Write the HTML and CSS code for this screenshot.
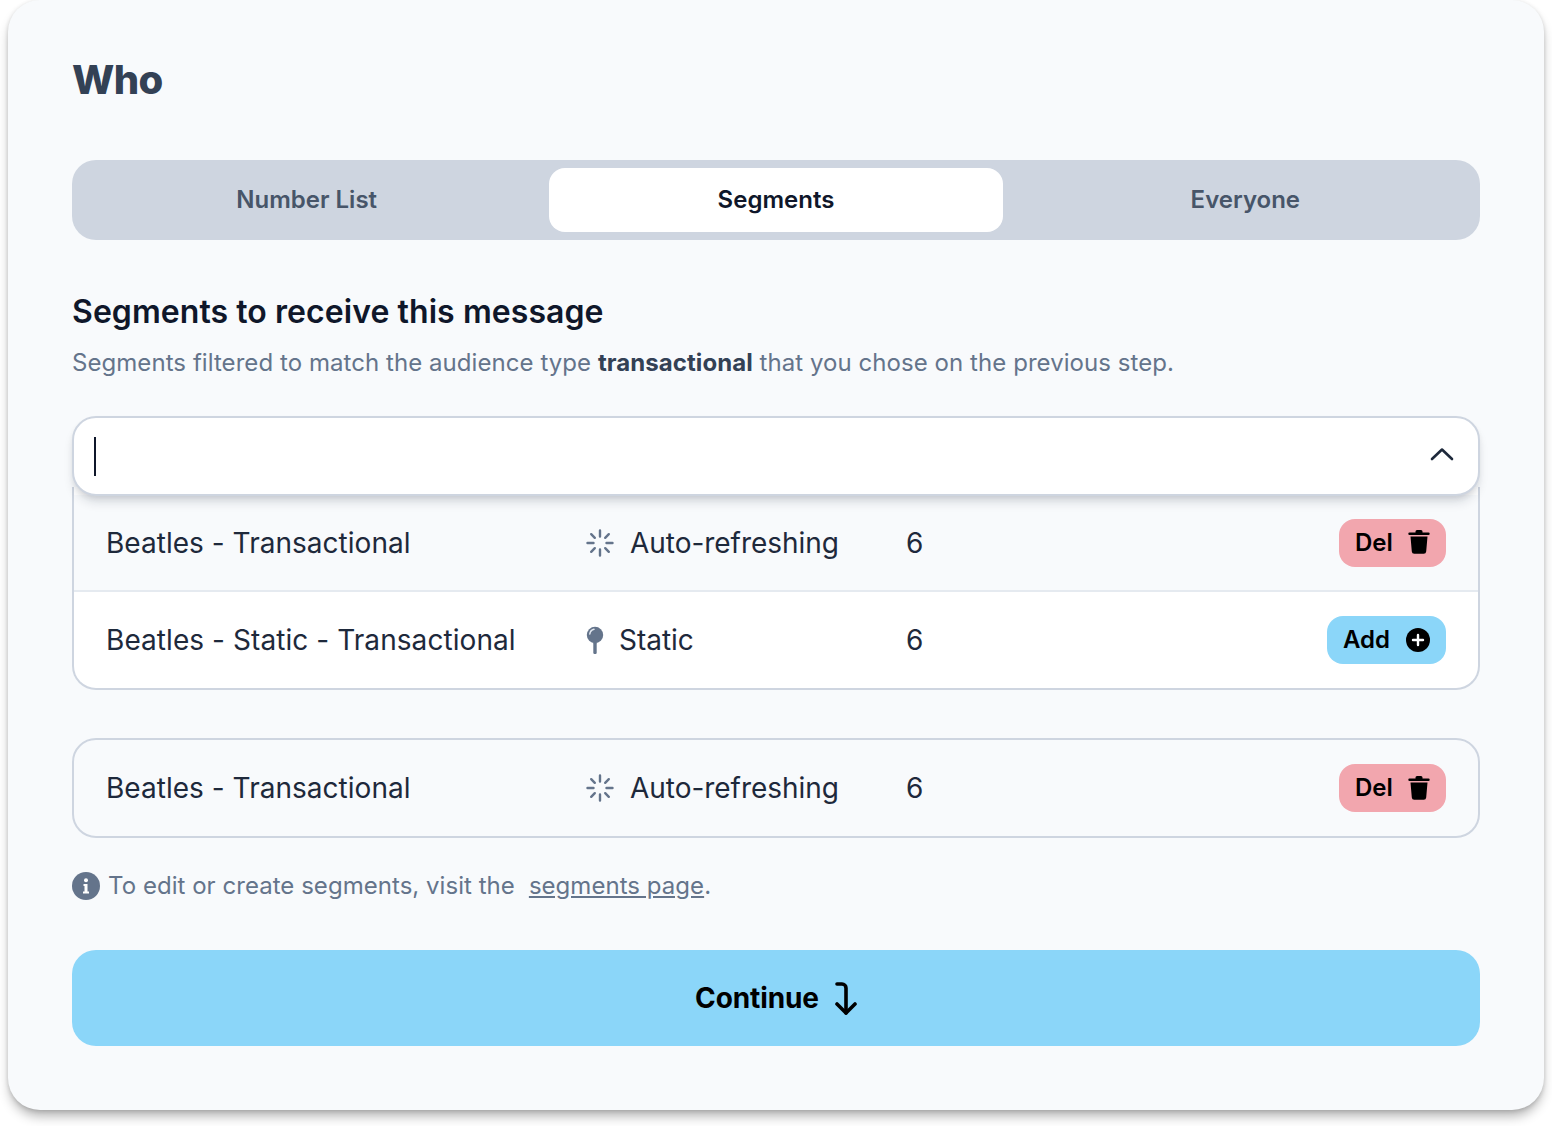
FILE: index.html
```html
<!DOCTYPE html>
<html lang="en">
<head>
<meta charset="utf-8">
<title>Who</title>
<link rel="stylesheet" href="styles.css">
</head>
<body>
<main class="card">
  <h1 class="title">Who</h1>
  <div class="tabs">
    <div class="tab">Number List</div>
    <div class="tab tab-active">Segments</div>
    <div class="tab">Everyone</div>
  </div>
  <h2 class="subtitle">Segments to receive this message</h2>
  <p class="desc">Segments filtered to match the audience type <strong>transactional</strong> that you chose on the previous step.</p>

  <div class="combo">
    <div class="combo-input">
      <span class="caret"></span>
      <svg class="chevron" viewBox="0 0 24 14" fill="none" stroke="#1e293b" stroke-width="2.6" stroke-linecap="round" stroke-linejoin="round"><path d="M2 12 12 2.5 22 12"/></svg>
    </div>
    <div class="options">
      <div class="row row-divided">
        <span class="name">Beatles - Transactional</span>
        <span class="type">
          <svg class="ico-spin" viewBox="0 0 28 28" fill="none" stroke="#64748b" stroke-width="2.4" stroke-linecap="round"><path d="M14 1.5v6M14 20.5v6M1.5 14h6M20.5 14h6M5.2 5.2l3.6 3.6M19.2 19.2l3.6 3.6M5.2 22.8l3.6-3.6M19.2 8.8l3.6-3.6"/></svg>
          Auto-refreshing
        </span>
        <span class="count">6</span>
        <button class="btn btn-del">Del
          <svg class="ico-trash" viewBox="0 0 22 24" fill="#000"><path d="M7.5 1.5A1.5 1.5 0 0 1 9 0h4a1.5 1.5 0 0 1 1.5 1.5V2.500h6a1.200 1.200 0 0 1 0 2.400H1.500a1.200 1.200 0 0 1 0-2.400h6V1.500Z"/><path d="M2.500 6.500h17l-1.300 15a2.500 2.500 0 0 1-2.500 2.300H6.300a2.500 2.500 0 0 1-2.500-2.300L2.500 6.500Z"/></svg>
        </button>
      </div>
      <div class="row">
        <span class="name">Beatles - Static - Transactional</span>
        <span class="type type-static">
          <svg class="ico-pin" viewBox="0 0 18 28"><circle cx="9" cy="9" r="8.200" fill="#64748b"/><path d="M3.800 8A5.500 5.500 0 0 1 8 3.300" fill="none" stroke="#e2e8f0" stroke-width="1.500" stroke-linecap="round"/><rect x="7.300" y="16" width="3.400" height="12" rx="1.200" fill="#64748b"/></svg>
          Static
        </span>
        <span class="count">6</span>
        <button class="btn btn-add">Add
          <svg class="ico-plus" viewBox="0 0 24 24"><circle cx="12" cy="12" r="12" fill="#000"/><path d="M12 7v10M7 12h10" stroke="#fff" stroke-width="2.400" stroke-linecap="round"/></svg>
        </button>
      </div>
    </div>
  </div>

  <div class="selected">
    <div class="row">
      <span class="name">Beatles - Transactional</span>
      <span class="type">
        <svg class="ico-spin" viewBox="0 0 28 28" fill="none" stroke="#64748b" stroke-width="2.4" stroke-linecap="round"><path d="M14 1.5v6M14 20.5v6M1.5 14h6M20.5 14h6M5.2 5.2l3.6 3.6M19.2 19.2l3.6 3.6M5.2 22.8l3.6-3.6M19.2 8.8l3.6-3.6"/></svg>
        Auto-refreshing
      </span>
      <span class="count">6</span>
      <button class="btn btn-del">Del
        <svg class="ico-trash" viewBox="0 0 22 24" fill="#000"><path d="M7.5 1.5A1.5 1.5 0 0 1 9 0h4a1.5 1.5 0 0 1 1.5 1.5V2.500h6a1.200 1.200 0 0 1 0 2.400H1.500a1.200 1.200 0 0 1 0-2.400h6V1.500Z"/><path d="M2.500 6.500h17l-1.300 15a2.500 2.500 0 0 1-2.500 2.300H6.300a2.500 2.500 0 0 1-2.500-2.300L2.500 6.500Z"/></svg>
      </button>
    </div>
  </div>

  <p class="info">
    <svg class="ico-info" viewBox="0 0 28 28"><circle cx="14" cy="14" r="14" fill="#64748b"/><circle cx="14" cy="8.300" r="2" fill="#fff"/><path d="M11.500 12h4v7.500h1.500v2h-6v-2h1.500V14h-1v-2Z" fill="#fff"/></svg>
    <span class="info-text">To edit or create segments, visit the</span>
    <span class="info-link-wrap"><a class="info-link" href="#">segments page</a>.</span>
  </p>

  <button class="continue"><span class="continue-label">Continue</span>
    <svg class="ico-arrow" viewBox="0 0 22 33" fill="none" stroke="#000" stroke-width="3.600" stroke-linecap="round" stroke-linejoin="round"><path d="M2 2h5a4 4 0 0 1 4 4v25"/><path d="M2 22l9 9 9-9"/></svg>
  </button>
</main>
</body>
</html>
```

FILE: styles.css
```css
* { box-sizing: border-box; }
html, body { margin: 0; padding: 0; background: #fff; }
body {
  width: 1552px;
  height: 1126px;
  overflow: hidden;
  padding: 0 8px;
  font-family: Inter, "Liberation Sans", sans-serif;
}
.card {
  width: 1536px;
  height: 1110px;
  padding: 56px 64px 64px;
  background: #f8fafc;
  border-radius: 32px;
  box-shadow: 0 8px 12px -2px rgba(0,0,0,.3), 0 1px 4px rgba(0,0,0,.14);
  display: flex;
  flex-direction: column;
}
.title {
  margin: 0;
  height: 48px;
  font-size: 40px;
  line-height: 48px;
  font-weight: 800;
  letter-spacing: -.6px;
  color: #334155;
}
.tabs {
  margin-top: 56px;
  height: 80px;
  padding: 8px;
  display: grid;
  grid-template-columns: repeat(3, 1fr);
  gap: 16px;
  background: #ced5e0;
  border-radius: 24px;
}
.tab {
  display: flex;
  align-items: center;
  justify-content: center;
  padding-bottom: 2px;
  border-radius: 16px;
  font-size: 24px;
  font-weight: 600;
  color: #475569;
}
.tab-active { background: #fff; color: #0f172a; }
.subtitle {
  margin: 52px 0 0;
  font-size: 32px;
  line-height: 40px;
  font-weight: 600;
  letter-spacing: .065px;
  color: #0f172a;
}
.desc {
  margin: 15px 0 0;
  font-size: 24px;
  line-height: 32px;
  letter-spacing: .06px;
  color: #64748b;
}
.desc strong { font-weight: 700; color: #334155; }
.combo { margin-top: 37px; }
.combo-input {
  position: relative;
  z-index: 2;
  height: 80px;
  padding: 0 24px 0 20px;
  display: flex;
  align-items: center;
  justify-content: space-between;
  background: #fff;
  border: 2px solid #ced5e0;
  border-radius: 24px;
  box-shadow: 0 8px 12px -3px rgba(15,23,42,.16), 0 3px 6px -2px rgba(15,23,42,.1);
}
.caret { width: 2px; height: 39px; background: #0f172a; }
.chevron { width: 24px; height: 14px; margin-top: -4px; }
.options {
  margin-top: -9px;
  padding-top: 8px;
  background: #fff;
  border: 2px solid #ced5e0;
  border-top: 0;
  border-radius: 0 0 24px 24px;
}
.options .row:first-child { background: #f8fafc; }
.row {
  height: 96px;
  padding: 0 32px;
  display: flex;
  align-items: center;
  font-size: 28px;
  letter-spacing: .03px;
  color: #1e293b;
}
.row-divided { height: 97px; border-bottom: 2px solid #e5eaf0; }
.options .row:last-child { border-radius: 0 0 22px 22px; }
.name { width: 479px; flex: none; }
.options .row:last-child .name { letter-spacing: .07px; }
.type { width: 321px; flex: none; display: flex; align-items: center; gap: 16px; padding-left: 1px; letter-spacing: -.03px; }
.type-static { gap: 14px; padding-left: 0; }
.count { flex: 1; }
.btn {
  height: 48px;
  display: flex;
  align-items: center;
  border: 0;
  border-radius: 16px;
  font-family: inherit;
  font-size: 24px;
  font-weight: 600;
  padding-bottom: 2px;
  color: #000;
}
.btn-del { width: 107px; padding-left: 16px; padding-right: 16px; justify-content: space-between; background: #f2a6ae; }
.btn-add { width: 119px; padding-left: 16px; padding-right: 16px; justify-content: space-between; background: #8bd6f9; }
.ico-spin { width: 28px; height: 28px; flex: none; }
.ico-pin { width: 20px; height: 28px; flex: none; }
.ico-trash { width: 22px; height: 24px; flex: none; }
.ico-plus { width: 24px; height: 24px; flex: none; }
.selected {
  margin-top: 48px;
  background: #f8fafc;
  border: 2px solid #ced5e0;
  border-radius: 24px;
}
.info {
  margin: 32px 0 0;
  height: 32px;
  display: flex;
  align-items: center;
  font-size: 24px;
  line-height: 32px;
  letter-spacing: .04px;
  color: #64748b;
}
.ico-info { width: 28px; height: 28px; flex: none; margin-right: 8px; }
.info-link-wrap { margin-left: 14px; }
.info-link { color: #64748b; text-decoration: underline; }
.continue {
  margin-top: 48px;
  height: 96px;
  display: flex;
  align-items: center;
  justify-content: center;
  gap: 16px;
  border: 0;
  border-radius: 24px;
  background: #8bd6f9;
  font-family: inherit;
  font-size: 28px;
  font-weight: 700;
  color: #000;
}
.continue-label { letter-spacing: -.1px; }
.ico-arrow { width: 22px; height: 33px; flex: none; }
```
